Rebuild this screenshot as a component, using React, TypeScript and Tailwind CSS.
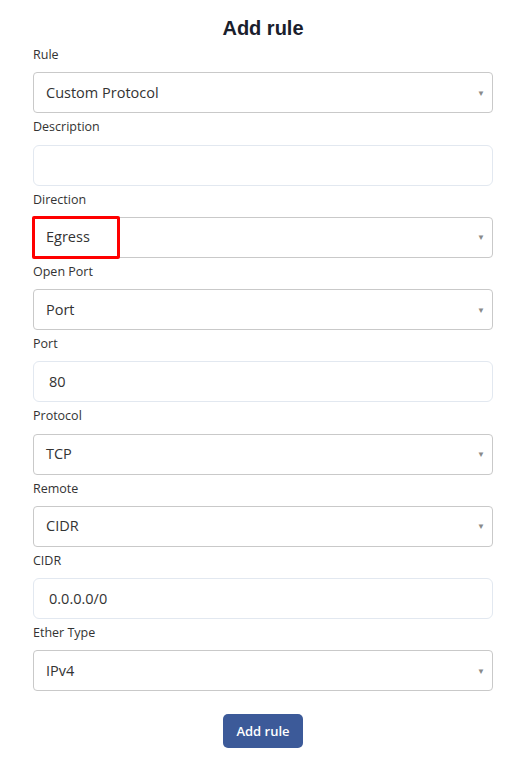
import React from "react";

type Field = { label: string; value: string; kind: "select" | "input"; highlight?: boolean };

const fields: Field[] = [
  { label: "Rule", value: "Custom Protocol", kind: "select" },
  { label: "Description", value: "", kind: "input" },
  { label: "Direction", value: "Egress", kind: "select", highlight: true },
  { label: "Open Port", value: "Port", kind: "select" },
  { label: "Port", value: "80", kind: "input" },
  { label: "Protocol", value: "TCP", kind: "select" },
  { label: "Remote", value: "CIDR", kind: "select" },
  { label: "CIDR", value: "0.0.0.0/0", kind: "input" },
  { label: "Ether Type", value: "IPv4", kind: "select" },
];

export default function App() {
  return (
    <div className="w-[516px] min-h-[757px] bg-white pl-[33px] pr-[23px] pt-[14px]" style={{ fontFamily: '"Open Sans", sans-serif' }}>
      <h1
        className="text-center text-[20px] font-bold leading-[28px] text-[#1a202c]"
        style={{ fontFamily: '"Liberation Sans", Arial, sans-serif' }}
      >
        Add rule
      </h1>
      <div className="flex flex-col">
        {fields.map((f, i) => (
          <div key={i} className="flex flex-col">
            <label className={`${i === 0 ? "mt-[3px]" : "mt-[4px]"} mb-[7.25px] text-[12.5px] leading-[20px] font-medium text-[#333]`}>
              {f.label}
            </label>
            {f.kind === "select" ? (
              <div className="relative flex h-[41px] items-center rounded-[4px] border border-[#c9c9c9] bg-white pl-[12px] text-[14.5px] text-[#333]">
                <span>{f.value}</span>
                <span className="absolute right-[7px] top-1/2 -translate-y-1/2 text-[8px] leading-none text-[#8a8a8a]">▼</span>
                {f.highlight && (
                  <div className="absolute left-[-2px] top-[-2px] h-[43px] w-[88px] rounded-[2px] border-[3px] border-[#ff0000]" />
                )}
              </div>
            ) : (
              <div className="flex h-[41px] items-center rounded-[6px] border border-[#e2e8f0] bg-white pl-[15px] text-[14.5px] text-[#333]">
                <span>{f.value}</span>
              </div>
            )}
          </div>
        ))}
      </div>
      <div className="flex justify-center pt-[23px]">
        <button className="h-[34px] w-[80px] rounded-[5px] bg-[#3c5a99] text-[13px] font-semibold text-white">
          Add rule
        </button>
      </div>
    </div>
  );
}
